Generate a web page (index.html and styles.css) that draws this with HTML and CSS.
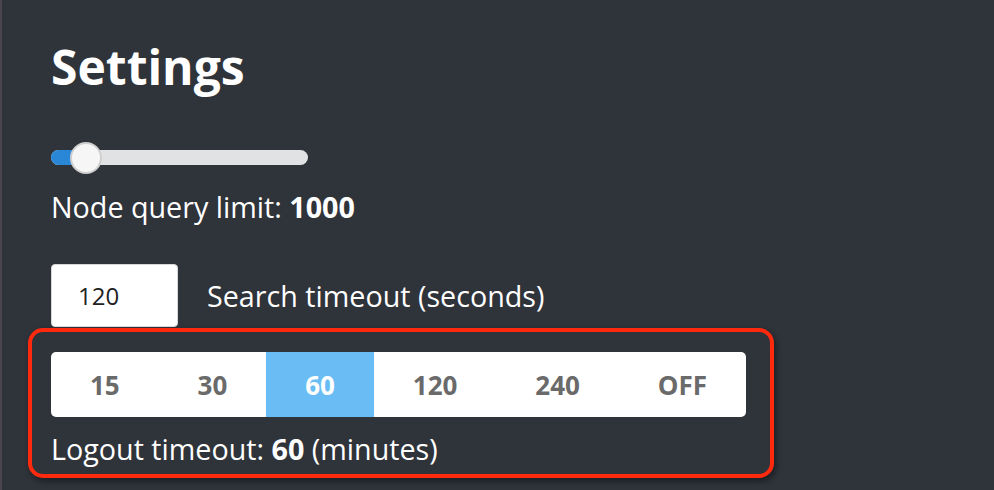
FILE: index.html
```html
<!DOCTYPE html>
<html lang="en">
<head>
    <meta charset="UTF-8">
    <meta name="viewport" content="width=device-width, initial-scale=1.0">
    <title>Settings</title>
    <link rel="stylesheet" href="styles.css">
</head>
<body>

    <div class="panel">
        <h1>Settings</h1>

        <div class="slider">
            <div class="slider-fill"></div>
            <div class="slider-thumb"></div>
        </div>
        <p class="label">Node query limit: <b>1000</b></p>

        <div class="field">
            <input type="text" class="num-input" value="120">
            <span class="label">Search timeout (seconds)</span>
        </div>

        <div class="highlight">
            <div class="segments">
                <button class="seg">15</button>
                <button class="seg">30</button>
                <button class="seg active">60</button>
                <button class="seg">120</button>
                <button class="seg">240</button>
                <button class="seg">OFF</button>
            </div>
            <p class="label logout">Logout timeout: <b>60</b> (minutes)</p>
        </div>
    </div>

</body>
</html>
```

FILE: styles.css
```css
body {
    font-family: "Open Sans", Arial, sans-serif;
    margin: 0;
    padding: 0;
    background-color: #2f333a;
    color: #fff;
}
.panel {
    height: 490px;
    box-sizing: border-box;
    border-left: 2px solid #4a4551;
    padding: 43px 0 0 49px;
}
h1 {
    margin: 0;
    font-size: 48px;
    line-height: 48px;
    font-weight: 700;
}
.slider {
    position: relative;
    width: 257px;
    height: 15px;
    margin-top: 59px;
    border-radius: 8px;
    background: #e1e2e3;
}
.slider-fill {
    width: 36px;
    height: 15px;
    border-radius: 8px 0 0 8px;
    background: #2a87d8;
}
.slider-thumb {
    position: absolute;
    left: 19px;
    top: -8px;
    width: 28px;
    height: 28px;
    border-radius: 50%;
    background: #f6f6f6;
    border: 2px solid #cfcfcf;
}
.label {
    margin: 0;
    font-size: 28.7px;
    line-height: 29px;
}
.slider + .label {
    margin-top: 27px;
}
.field {
    display: flex;
    align-items: center;
    gap: 29px;
    margin-top: 43px;
}
.num-input {
    width: 127px;
    height: 63px;
    box-sizing: border-box;
    border: 1px solid #d8d8d8;
    border-radius: 4px;
    padding: 0 0 0 26px;
    font-family: "Open Sans", Arial, sans-serif;
    font-size: 24px;
    color: #222;
    background: #fff;
}
.highlight {
    width: 746px;
    box-sizing: border-box;
    margin: 1px 0 0 -23px;
    padding: 20px 24px 0 20px;
    height: 150px;
    border: 4px solid #ff2a0e;
    border-radius: 15px;
    box-shadow: 2px 3px 6px rgba(0, 0, 0, 0.45);
}
.highlight .segments {
    margin-left: -1px;
}
.segments {
    display: flex;
    height: 65px;
    border-radius: 5px;
    background: #fff;
    overflow: hidden;
}
.seg {
    flex: 1 1 auto;
    border: none;
    padding: 0;
    margin: 0;
    background: transparent;
    font-family: "Open Sans", Arial, sans-serif;
    font-size: 26px;
    font-weight: 700;
    color: #6a6a6a;
}
.seg.active {
    background: #6abdf4;
    color: #fff;
}
.logout {
    margin-top: 17px;
    margin-left: -1px;
}
```
